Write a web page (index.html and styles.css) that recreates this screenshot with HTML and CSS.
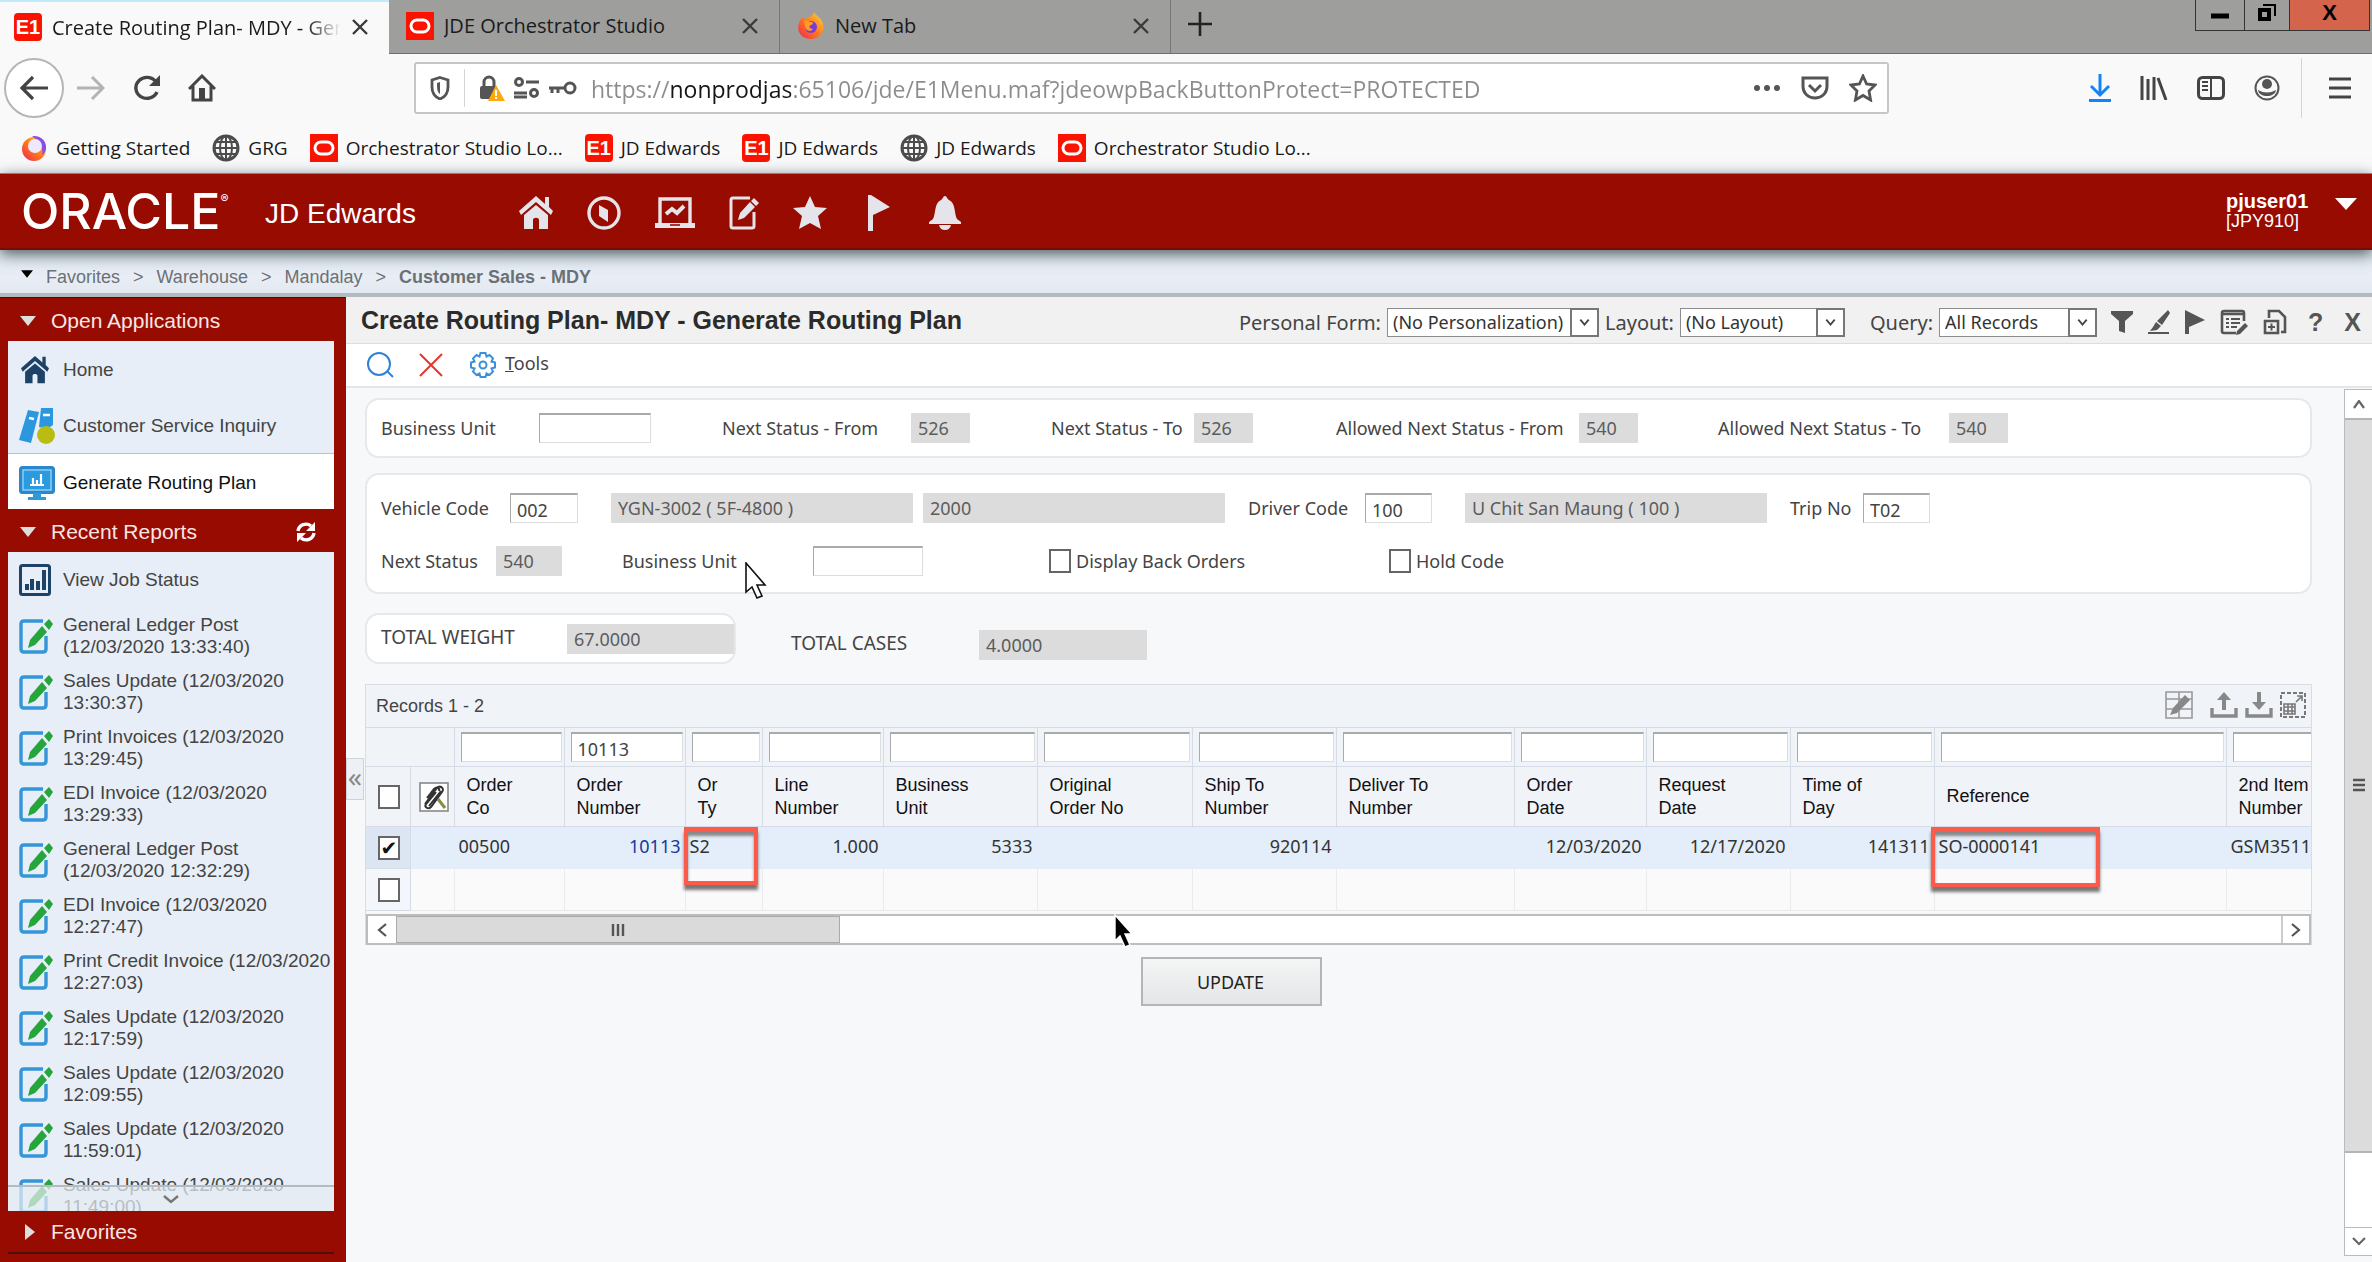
FILE: index.html
```html
<!DOCTYPE html>
<html lang="en">
<head>
<meta charset="utf-8">
<title>Create Routing Plan- MDY - Generate Routing Plan</title>
<link rel="stylesheet" href="styles.css">
</head>
<body>
<svg class="defs" aria-hidden="true">
  <defs>
    <linearGradient id="fox" x1="1" y1="0" x2="0" y2="1"><stop offset="0" stop-color="#ffd83a"/><stop offset=".5" stop-color="#ff7a1f"/><stop offset="1" stop-color="#f0244f"/></linearGradient>
  </defs>
  <symbol id="i-firefox" viewBox="0 0 28 28"><path d="M17 0c1 3 6 5 8 9 4 9-1 18-11 18S-1 19 2 11c1-3 3-5 4-6l2 3c3-4 8-3 9-8z" fill="url(#fox)"/><circle cx="14" cy="15" r="6" fill="#7a3bd8"/><path d="M7 9c4-1 5 1 8 1 2 0 1 3-1 3-3 1-1 4 2 4-3 4-8 1-8-3 0-2-1-3-1-5z" fill="#ff9a26"/></symbol>
  <symbol id="i-firefox2" viewBox="0 0 28 28"><circle cx="14" cy="15" r="12" fill="url(#fox)"/><path d="M12 2c9-1 15 5 14 13-1 3-2 5-4 6 2-7-3-14-10-19z" fill="#8a4fe0"/><circle cx="15" cy="12" r="7" fill="#efe9ff"/></symbol>
  <symbol id="i-oracle" viewBox="0 0 28 28"><rect width="28" height="28" fill="#fb1300"/><rect x="5" y="8" width="18" height="12" rx="6" fill="none" stroke="#fff" stroke-width="3"/></symbol>
  <symbol id="i-globe" viewBox="0 0 28 28"><g fill="none" stroke="#4c4c4c" stroke-width="2"><circle cx="14" cy="14" r="12" stroke-width="3"/><ellipse cx="14" cy="14" rx="6" ry="12"/><path d="M14 2v24M2 14h24M4 8h20M4 20h20"/></g></symbol>
  <symbol id="i-close" viewBox="0 0 18 18"><path d="M2 2l14 14M16 2L2 16" fill="none" stroke="#3a3a3a" stroke-width="2.4"/></symbol>
  <symbol id="i-house" viewBox="0 0 34 34"><path d="M17 0L0 15l2 4L17 6l15 13 2-4-4-4V1h-4v7z"/><path d="M17 9L5 19v14h9v-9c0-3 6-3 6 0v9h9V19z"/></symbol>
  <symbol id="i-report" viewBox="0 0 34 36"><path d="M24 3H5Q2 3 2 6v25q0 3 3 3h19q3 0 3-3V18" fill="none" stroke="#3496d8" stroke-width="3.4"/><path d="M25 6l5-5 4 5-4 6zM23 8l5 6-12 13-7 3 2-8z" fill="#26a53c"/></symbol>
  <symbol id="i-down" viewBox="0 0 14 10"><path d="M1 1l6 7 6-7" fill="none" stroke="#444" stroke-width="2.6"/></symbol>
  <symbol id="i-tri" viewBox="0 0 16 10"><path d="M0 0h16L8 10z"/></symbol>
  <symbol id="i-left" viewBox="0 0 10 14"><path d="M9 1L2 7l7 6" fill="none" stroke="#555" stroke-width="2.2"/></symbol>
</svg>

<header class="browser">
  <div class="tabs">
    <div class="tab active"><span class="e1">E1</span><span class="tab-title">Create Routing Plan- MDY - Generate</span><button class="plain" aria-label="Close tab"><svg width="18" height="18"><use href="#i-close"/></svg></button></div>
    <div class="tab"><svg width="28" height="28"><use href="#i-oracle"/></svg><span class="tab-title">JDE Orchestrator Studio</span><button class="plain" aria-label="Close tab"><svg width="18" height="18"><use href="#i-close"/></svg></button></div>
    <div class="tab"><svg width="28" height="28"><use href="#i-firefox"/></svg><span class="tab-title">New Tab</span><button class="plain" aria-label="Close tab"><svg width="18" height="18"><use href="#i-close"/></svg></button></div>
    <button class="plain new-tab" aria-label="New tab"><svg width="26" height="26" viewBox="0 0 26 26"><path d="M13 1v24M1 13h24" stroke="#222" stroke-width="2.6"/></svg></button>
    <div class="window-buttons">
      <button class="win min" aria-label="Minimize"><svg width="18" height="18" viewBox="0 0 18 18"><path d="M0 12h18" stroke="#000" stroke-width="5"/></svg></button>
      <button class="win restore" aria-label="Restore"><svg width="18" height="18" viewBox="0 0 18 18"><path d="M2 6h9v9H2z" fill="none" stroke="#000" stroke-width="4"/><path d="M5 1h12v11" fill="none" stroke="#000" stroke-width="2"/></svg></button>
      <button class="win exit" aria-label="Close">X</button>
    </div>
  </div>
  <div class="nav">
    <button class="plain back" aria-label="Back"><svg width="30" height="26" viewBox="0 0 30 26"><path d="M14 2L3 13l11 11M3 13h26" fill="none" stroke="#444" stroke-width="3.2"/></svg></button>
    <button class="plain fwd" aria-label="Forward"><svg width="28" height="24" viewBox="0 0 28 24"><path d="M15 1l11 11-11 11M26 12H0" fill="none" stroke="#b4b4b4" stroke-width="3"/></svg></button>
    <button class="plain reload" aria-label="Reload"><svg width="28" height="26" viewBox="0 0 28 26"><path d="M24 17a11 10.500 0 1 1-1-10" fill="none" stroke="#444" stroke-width="3.4"/><path d="M16 11h11V0z" fill="#444"/></svg></button>
    <button class="plain home" aria-label="Home"><svg width="28" height="28" viewBox="0 0 28 28"><path d="M1 15L14 2l13 13M5 12v14h18V12" fill="none" stroke="#444" stroke-width="3"/><path d="M11 14h6v11h-6z" fill="#444"/></svg></button>
    <div class="urlbar">
      <svg width="20" height="24" viewBox="0 0 20 24"><path d="M10 1.500l8 2.500v7c0 6-3 10-8 12-5-2-8-6-8-12V4z" fill="none" stroke="#555" stroke-width="2.800"/><path d="M10 6v12c-3-2-3-6-3-11z" fill="#555"/></svg>
      <i class="sep"></i>
      <svg width="26" height="27" viewBox="0 0 26 27"><path d="M5 12V7a5 5 0 0 1 10 0v5" fill="none" stroke="#555" stroke-width="3"/><rect x="1" y="11" width="17" height="13" rx="2" fill="#555"/><path d="M17 10l9 16H9z" fill="#fda80d"/><path d="M17 15v6M17 22v2" stroke="#fff" stroke-width="2"/></svg>
      <svg width="26" height="22" viewBox="0 0 26 22"><g fill="none" stroke="#555" stroke-width="3"><circle cx="5" cy="5" r="3.500"/><circle cx="20" cy="16" r="3.500"/><path d="M12 5h13M0 16h13M0 20h13"/></g></svg>
      <svg width="28" height="16" viewBox="0 0 28 16"><g fill="none" stroke="#555" stroke-width="3"><circle cx="21" cy="8" r="5"/><path d="M16 8H0M3 8v5M9 8v5"/></g></svg>
      <input class="url" type="text" aria-label="Address" value="https://nonprodjas:65106/jde/E1Menu.maf?jdeowpBackButtonProtect=PROTECTED">
      <svg width="28" height="8" viewBox="0 0 28 8"><g fill="#555"><circle cx="4" cy="4" r="3"/><circle cx="14" cy="4" r="3"/><circle cx="24" cy="4" r="3"/></g></svg>
      <svg width="28" height="24" viewBox="0 0 28 24"><path d="M2 2h24v8c0 8-6 12-12 12S2 18 2 10z" fill="none" stroke="#555" stroke-width="3"/><path d="M8 9l6 6 6-6" fill="none" stroke="#555" stroke-width="3"/></svg>
      <svg width="28" height="28" viewBox="0 0 28 28"><path d="M14 2l3.600 8 8.400 1-6 6 1.600 9L14 21.500 6.400 26 8 17l-6-6 8.400-1z" fill="none" stroke="#555" stroke-width="2.800"/></svg>
    </div>
    <div class="tools">
      <svg width="22" height="28" viewBox="0 0 22 28"><path d="M11 0v20M2 12l9 9 9-9M0 26.500h22" fill="none" stroke="#1483f7" stroke-width="3"/></svg>
      <svg width="28" height="24" viewBox="0 0 28 24"><path d="M2 0v24M8 3v21M14 1v23M18 2l8 22" fill="none" stroke="#444" stroke-width="3"/></svg>
      <svg width="28" height="24" viewBox="0 0 28 24"><rect x="1.500" y="1.500" width="25" height="21" rx="4" fill="none" stroke="#444" stroke-width="3"/><path d="M14 1v22M5 6h6M5 10h6M5 14h6" stroke="#444" stroke-width="2"/></svg>
      <svg width="26" height="26" viewBox="0 0 26 26"><circle cx="13" cy="13" r="11.500" fill="none" stroke="#555" stroke-width="2"/><circle cx="13" cy="9" r="5" fill="#555"/><path d="M4 15q9 5 18 0c-1 8-17 8-18 0z" fill="#555"/></svg>
      <i class="sep tall"></i>
      <svg width="22" height="22" viewBox="0 0 22 22"><path d="M0 2h22M0 11h22M0 20h22" stroke="#444" stroke-width="3.200"/></svg>
    </div>
  </div>
  <nav class="bookmarks">
    <a href="#"><svg width="28" height="28"><use href="#i-firefox2"/></svg>Getting Started</a>
    <a href="#"><svg width="28" height="28"><use href="#i-globe"/></svg>GRG</a>
    <a href="#"><svg width="28" height="28"><use href="#i-oracle"/></svg>Orchestrator Studio Lo...</a>
    <a href="#"><span class="e1">E1</span>JD Edwards</a>
    <a href="#"><span class="e1">E1</span>JD Edwards</a>
    <a href="#"><svg width="28" height="28"><use href="#i-globe"/></svg>JD Edwards</a>
    <a href="#"><svg width="28" height="28"><use href="#i-oracle"/></svg>Orchestrator Studio Lo...</a>
  </nav>
</header>

<header class="brand">
  <span class="logo">ORACLE<sup>®</sup></span>
  <span class="product">JD Edwards</span>
  <nav class="brand-icons">
    <a href="#" aria-label="Home"><svg width="34" height="34"><use href="#i-house"/></svg></a>
    <a href="#" aria-label="Navigator"><svg width="34" height="34" viewBox="0 0 34 34"><circle cx="17" cy="17" r="15" fill="none" stroke="#e4e4ea" stroke-width="3.400"/><path d="M12 9l9 5v12l-9-6z"/></svg></a>
    <a href="#" aria-label="Dashboard"><svg width="40" height="32" viewBox="0 0 40 32"><path d="M5 26V2h30v24" fill="none" stroke="#e4e4ea" stroke-width="3.400"/><path d="M0 26h40v5H0z"/><path d="M11 17l6-5 5 4 7-7" fill="none" stroke="#e4e4ea" stroke-width="4"/><path d="M15 28h10" stroke="#980b00" stroke-width="1.600"/></svg></a>
    <a href="#" aria-label="Edit"><svg width="30" height="34" viewBox="0 0 30 34"><path d="M21 2H4Q2 2 2 4v26q0 2 2 2h19q2 0 2-2V16" fill="none" stroke="#e4e4ea" stroke-width="3"/><path d="M25 2l5 5-3 3-5-5zM21 6l5 5-11 11-6 2 2-7z"/></svg></a>
    <a href="#" aria-label="Favorites"><svg width="34" height="34" viewBox="0 0 34 34"><path d="M17 0l5 11 12 1-9 8 3 13-11-6-11 6 3-13-9-8 12-1z"/></svg></a>
    <a href="#" aria-label="Flag"><svg width="34" height="36" viewBox="0 0 34 36"><path d="M7 0h3l19 12-17 8v16H7z"/></svg></a>
    <a href="#" aria-label="Notifications"><svg width="32" height="34" viewBox="0 0 32 34"><path d="M16 0c2 0 2 3 4 4 7 3 5 14 8 19l4 3v2H0v-2l4-3C7 18 5 7 12 4c2-1 2-4 4-4zM10 29h12q-1 5-6 5t-6-5z"/></svg></a>
  </nav>
  <div class="user"><strong>pjuser01</strong><span>[JPY910]</span></div>
  <svg class="user-arrow" width="22" height="12" viewBox="0 0 16 10" preserveAspectRatio="none"><path d="M0 0h16L8 10z"/></svg>
</header>

<nav class="crumbs">
  <svg width="12" height="8"><use href="#i-tri"/></svg>
  <a href="#">Favorites</a><span>&gt;</span><a href="#">Warehouse</a><span>&gt;</span><a href="#">Mandalay</a><span>&gt;</span><b>Customer Sales - MDY</b>
</nav>

<div class="workspace">
  <aside class="sidebar">
    <h2><svg width="16" height="10"><use href="#i-tri"/></svg>Open Applications</h2>
    <ul class="panel apps">
      <li><svg class="navy" width="28" height="28"><use href="#i-house"/></svg><a href="#">Home</a></li>
      <li><svg width="36" height="36" viewBox="0 0 36 36"><path d="M9 2l11 2-8 31-12-3z" fill="#2b97df"/><path d="M22 0h12v17l-6 4-8-2z" fill="#2b97df"/><path d="M10 10l5 1M24 7h7" stroke="#fff" stroke-width="2.400"/><circle cx="27" cy="27" r="9" fill="#b9bd13"/></svg><a href="#">Customer Service Inquiry</a></li>
      <li class="current"><svg width="36" height="34" viewBox="0 0 36 34"><rect x="1.500" y="1.500" width="33" height="25" rx="2" fill="#2b9be0" stroke="#2b87cb" stroke-width="3"/><rect x="4" y="4" width="28" height="20" fill="none" stroke="#bfe2f7"/><path d="M11 19h14M14 18v-6M18 18v-4M22 18V8" stroke="#fff" stroke-width="2.200"/><path d="M14 27h8v4h5v3H9v-3h5z" fill="#2b9be0"/></svg><a href="#">Generate Routing Plan</a></li>
    </ul>
    <h2><svg width="16" height="10"><use href="#i-tri"/></svg>Recent Reports
      <button class="plain refresh" aria-label="Refresh reports"><svg width="20" height="20" viewBox="0 0 20 20"><path d="M2 9a8 8 0 0 1 13-5M18 11a8 8 0 0 1-13 5" fill="none" stroke="#fff" stroke-width="3.400"/><path d="M19 0v9h-9zM1 20v-9h9z" fill="#fff"/></svg></button></h2>
    <ul class="panel reports">
      <li class="single"><svg width="32" height="32" viewBox="0 0 32 32"><rect x="1.500" y="1.500" width="29" height="29" rx="2" fill="none" stroke="#1d4268" stroke-width="3"/><path d="M8 26v-6M13 26V15M19 26v-9M25 26V6" stroke="#1d4268" stroke-width="4"/></svg><a href="#">View Job Status</a></li>
      <li><svg width="34" height="36"><use href="#i-report"/></svg><a href="#">General Ledger Post (12/03/2020 13:33:40)</a></li>
      <li><svg width="34" height="36"><use href="#i-report"/></svg><a href="#">Sales Update (12/03/2020 13:30:37)</a></li>
      <li><svg width="34" height="36"><use href="#i-report"/></svg><a href="#">Print Invoices (12/03/2020 13:29:45)</a></li>
      <li><svg width="34" height="36"><use href="#i-report"/></svg><a href="#">EDI Invoice (12/03/2020 13:29:33)</a></li>
      <li><svg width="34" height="36"><use href="#i-report"/></svg><a href="#">General Ledger Post (12/03/2020 12:32:29)</a></li>
      <li><svg width="34" height="36"><use href="#i-report"/></svg><a href="#">EDI Invoice (12/03/2020 12:27:47)</a></li>
      <li><svg width="34" height="36"><use href="#i-report"/></svg><a href="#">Print Credit Invoice (12/03/2020 12:27:03)</a></li>
      <li><svg width="34" height="36"><use href="#i-report"/></svg><a href="#">Sales Update (12/03/2020 12:17:59)</a></li>
      <li><svg width="34" height="36"><use href="#i-report"/></svg><a href="#">Sales Update (12/03/2020 12:09:55)</a></li>
      <li><svg width="34" height="36"><use href="#i-report"/></svg><a href="#">Sales Update (12/03/2020 11:59:01)</a></li>
      <li><svg width="34" height="36"><use href="#i-report"/></svg><a href="#">Sales Update (12/03/2020 11:49:00)</a></li>
      <li class="more"><svg width="16" height="9" viewBox="0 0 16 9"><path d="M1 1l7 6 7-6" fill="none" stroke="#777" stroke-width="2.400"/></svg></li>
    </ul>
    <h2 class="favorites"><svg width="10" height="16" viewBox="0 0 10 16"><path d="M0 0v16l10-8z"/></svg>Favorites</h2>
  </aside>

  <main class="main">
    <div class="titlebar">
      <h1>Create Routing Plan- MDY - Generate Routing Plan</h1>
      <label for="pf">Personal Form:</label>
      <span class="select pf"><select id="pf"><option>(No Personalization)</option></select><svg width="14" height="10"><use href="#i-down"/></svg></span>
      <label for="lay">Layout:</label>
      <span class="select lay"><select id="lay"><option>(No Layout)</option></select><svg width="14" height="10"><use href="#i-down"/></svg></span>
      <label for="qry" class="query">Query:</label>
      <span class="select qry"><select id="qry"><option>All Records</option></select><svg width="14" height="10"><use href="#i-down"/></svg></span>
      <div class="title-icons">
        <svg width="22" height="22" viewBox="0 0 22 22"><path d="M0 0h22v3l-8 7v12l-6-2V10L0 3z"/></svg>
        <svg width="22" height="24" viewBox="0 0 22 24"><path d="M20 0l2 3-8 12-5-4zM8 12l5 4-4 4-7 1 3-4z"/><path d="M0 22h21v2H0z"/></svg>
        <svg width="20" height="24" viewBox="0 0 20 24"><path d="M0 0l20 10L4 17v7H0z"/></svg>
        <svg width="28" height="26" viewBox="0 0 28 26"><path d="M24 12V4q0-2-2-2H4Q2 2 2 4v18q0 2 2 2h12M2 5h22" fill="none" stroke="#555" stroke-width="2.600"/><path d="M6 10h3M11 10h9M6 14h3M11 14h9M6 18h3M11 18h6" stroke="#555" stroke-width="2"/><path d="M25 14l3 3-8 8-4 1 1-4z"/></svg>
        <svg width="24" height="26" viewBox="0 0 24 26"><path d="M6 9V2h10l6 6v15h-4" fill="none" stroke="#555" stroke-width="2.600"/><path d="M2 12h13v12H2z" fill="none" stroke="#555" stroke-width="2.600"/><path d="M5 18h7M8.500 14.500v7" stroke="#555" stroke-width="2"/></svg>
        <b>?</b>
        <b>X</b>
      </div>
    </div>
    <div class="toolbar">
      <button class="plain" aria-label="Find"><svg width="28" height="26" viewBox="0 0 28 26"><g fill="none" stroke="#2f83d6" stroke-width="2"><circle cx="13" cy="12" r="11"/><path d="M21 19l6 6"/></g></svg></button>
      <button class="plain" aria-label="Cancel"><svg width="24" height="24" viewBox="0 0 24 24"><path d="M1 1l22 22M23 1L1 23" stroke="#e2372d" stroke-width="2"/></svg></button>
      <button class="plain tools-menu"><svg width="26" height="26" viewBox="0 0 26 26"><g fill="none" stroke="#3d8fd9" stroke-width="2"><circle cx="13" cy="13" r="3.500"/><path d="M10.500 1h5l1 3.500 3-1.500 3.500 3.500-1.500 3 3.500 1v5l-3.500 1 1.500 3-3.500 3.500-3-1.500-1 3.500h-5l-1-3.500-3 1.500L3 19.500l1.500-3L1 15.500v-5l3.500-1L3 6.500 6.500 3l3 1.500z"/></g></svg><span><u>T</u>ools</span></button>
    </div>

    <div class="body">
      <div class="content">
        <button class="plain collapse" aria-label="Collapse sidebar">«</button>
        <section class="card row status">
          <label for="f1">Business Unit</label><input id="f1" type="text">
          <label for="f2">Next Status - From</label><input id="f2" type="text" readonly value="526">
          <label for="f3">Next Status - To</label><input id="f3" type="text" readonly value="526">
          <label for="f4">Allowed Next Status - From</label><input id="f4" type="text" readonly value="540">
          <label for="f5">Allowed Next Status - To</label><input id="f5" type="text" readonly value="540">
        </section>
        <section class="card vehicle">
          <div class="row line1">
            <label for="f6">Vehicle Code</label><input id="f6" type="text" value="002">
            <input class="vehicle-name" type="text" readonly aria-label="Vehicle description" value="YGN-3002 ( 5F-4800 )">
            <input class="vehicle-size" type="text" readonly aria-label="Vehicle capacity" value="2000">
            <label class="driver" for="f7">Driver Code</label><input id="f7" type="text" value="100">
            <input class="driver-name" type="text" readonly aria-label="Driver name" value="U Chit San Maung ( 100 )">
            <label class="trip" for="f8">Trip No</label><input id="f8" type="text" value="T02">
          </div>
          <div class="row line2">
            <label for="f9">Next Status</label><input id="f9" type="text" readonly value="540">
            <label class="unit" for="f10">Business Unit</label><input id="f10" type="text">
            <label class="check back-orders"><input type="checkbox">Display Back Orders</label>
            <label class="check"><input type="checkbox">Hold Code</label>
          </div>
          <svg class="cursor" width="22" height="38" viewBox="0 0 22 38"><path d="M1 1v29l6-5 5 11 5-2-5-11h8z" fill="#fff" stroke="#111" stroke-width="1.600"/></svg>
        </section>
        <div class="totals">
          <div class="card"><label for="f11">TOTAL WEIGHT</label><input id="f11" type="text" readonly value="67.0000"></div>
          <div class="cases"><label for="f12">TOTAL CASES</label><input id="f12" type="text" readonly value="4.0000"></div>
        </div>

        <section class="grid">
          <div class="grid-head"><span>Records 1 - 2</span>
            <div class="grid-icons">
              <svg width="28" height="28" viewBox="0 0 28 28"><path d="M1 1h26v26H1zM1 8h26M1 18h26M14 1v26" fill="none" stroke="#999" stroke-width="1.600"/><path d="M20 4l5 5-13 13-7 2 3-7z" fill="#888"/></svg>
              <svg width="28" height="26" viewBox="0 0 28 26"><path d="M2 16v8h24v-8" fill="none" stroke="#888" stroke-width="3.400"/><path d="M14 0l7 8h-5v10h-4V8H7z" fill="#888"/></svg>
              <svg width="28" height="26" viewBox="0 0 28 26"><path d="M2 16v8h24v-8" fill="none" stroke="#888" stroke-width="3.400"/><path d="M14 18l7-8h-5V0h-4v10H7z" fill="#888"/></svg>
              <svg width="26" height="26" viewBox="0 0 26 26"><rect x="1" y="1" width="24" height="24" fill="none" stroke="#777" stroke-width="2" stroke-dasharray="4 2"/><path d="M4 12h11v10H4zM4 15h11M4 19h11M8 12v10M12 12v10M16 10l6-6M17 4h5v5" fill="none" stroke="#777" stroke-width="1.600"/></svg>
            </div>
          </div>
          <div class="grid-view">
          <table>
            <colgroup><col class="c44"><col class="c44"><col class="c110"><col class="c121"><col class="c77"><col class="c121"><col class="c154"><col class="c155"><col class="c144"><col class="c178"><col class="c132"><col class="c144"><col class="c144"><col class="c292"><col class="c144"></colgroup>
            <thead>
              <tr class="filters">
                <td colspan="2"></td>
                <td><input type="text" aria-label="Filter Order Co"></td><td><input type="text" aria-label="Filter Order Number" value="10113"></td><td><input type="text" aria-label="Filter Or Ty"></td><td><input type="text" aria-label="Filter Line Number"></td><td><input type="text" aria-label="Filter Business Unit"></td><td><input type="text" aria-label="Filter Original Order No"></td><td><input type="text" aria-label="Filter Ship To"></td><td><input type="text" aria-label="Filter Deliver To"></td><td><input type="text" aria-label="Filter Order Date"></td><td><input type="text" aria-label="Filter Request Date"></td><td><input type="text" aria-label="Filter Time of Day"></td><td><input type="text" aria-label="Filter Reference"></td><td><input type="text" aria-label="Filter 2nd Item Number"></td>
              </tr>
              <tr class="heads">
                <th class="pick"><input type="checkbox" aria-label="Select all"></th>
                <th class="pick"><svg width="30" height="30" viewBox="0 0 30 30"><rect x="1" y="1" width="28" height="28" fill="#fff" stroke="#888" stroke-width="1.600"/><path d="M6 22L18 6c3-3 8 0 5 4L12 25c-3 3-7 0-5-3L17 10M10 24L22 9M8 16l7-9c3-3 6-1 5 2" fill="none" stroke="#333" stroke-width="2"/><path d="M19 17l7 9" stroke="#8a8a40" stroke-width="3"/></svg></th>
                <th>Order<br>Co</th><th>Order<br>Number</th><th>Or<br>Ty</th><th>Line<br>Number</th><th>Business<br>Unit</th><th>Original<br>Order No</th><th>Ship To<br>Number</th><th>Deliver To<br>Number</th><th>Order<br>Date</th><th>Request<br>Date</th><th>Time of<br>Day</th><th>Reference</th><th>2nd Item<br>Number</th>
              </tr>
            </thead>
            <tbody>
              <tr class="selected">
                <td class="pick"><input type="checkbox" checked aria-label="Select row 1"></td><td></td>
                <td>00500</td><td class="num"><a href="#">10113</a></td><td class="marked">S2<i class="mark"></i></td><td class="num">1.000</td><td class="num">5333</td><td></td><td class="num">920114</td><td></td><td class="num">12/03/2020</td><td class="num">12/17/2020</td><td class="num">141311</td><td class="marked">SO-0000141<i class="mark wide"></i></td><td>GSM3511</td>
              </tr>
              <tr>
                <td class="pick"><input type="checkbox" aria-label="Select row 2"></td><td></td><td></td><td></td><td></td><td></td><td></td><td></td><td></td><td></td><td></td><td></td><td></td><td></td><td></td>
              </tr>
            </tbody>
          </table>
          </div>
          <div class="hscroll">
            <button class="plain" aria-label="Scroll left"><svg width="10" height="14"><use href="#i-left"/></svg></button>
            <div class="hthumb"><svg width="14" height="12" viewBox="0 0 14 12"><path d="M2 0v12M7 0v12M12 0v12" stroke="#555" stroke-width="2.400"/></svg></div>
            <button class="plain right" aria-label="Scroll right"><svg width="10" height="14" viewBox="0 0 10 14"><path d="M1 1l7 6-7 6" fill="none" stroke="#555" stroke-width="2.200"/></svg></button>
          </div>
          <svg class="cursor dark" width="20" height="34" viewBox="0 0 20 34"><path d="M1 1v26l5-5 5 11 5-2-5-11h7z" fill="#000" stroke="#fff" stroke-width="1.400"/></svg>
        </section>
        <button class="update">UPDATE</button>
      </div>
      <div class="vscroll">
        <button class="plain" aria-label="Scroll up"><svg width="12" height="9" viewBox="0 0 12 9"><path d="M1 8l5-7 5 7" fill="none" stroke="#666" stroke-width="2.200"/></svg></button>
        <div class="vthumb"><svg width="12" height="14" viewBox="0 0 12 14"><path d="M0 2h12M0 7h12M0 12h12" stroke="#555" stroke-width="2.600"/></svg></div>
        <button class="plain bottom" aria-label="Scroll down"><svg width="14" height="9" viewBox="0 0 14 9"><path d="M1 1l6 6 6-6" fill="none" stroke="#666" stroke-width="2.200"/></svg></button>
      </div>
    </div>
  </main>
</div>
</body>
</html>
```
FILE: styles.css
```css
* { box-sizing: border-box; }
body {
  margin: 0;
  min-height: 100vh;
  display: flex;
  flex-direction: column;
  font-family: "Liberation Sans", Arial, sans-serif;
  font-size: 18px;
  color: #444;
  background: #f6f8fa;
}
.defs { position: absolute; width: 0; height: 0; }
svg { flex: none; display: block; }
a { color: inherit; text-decoration: none; }
h1, h2, ul { margin: 0; padding: 0; list-style: none; font-weight: normal; }
.plain { border: 0; background: none; padding: 0; font: inherit; color: inherit; display: flex; align-items: center; justify-content: center; }

/* browser window */
.browser { background: #f9f9fa; font-family: "Open Sans", "Noto Sans", sans-serif; color: #1a1a1a; }
.tabs { display: flex; height: 54px; background: #9e9e9d; border-bottom: 1px solid #6f6f6f; }
.tab { width: 391px; display: flex; align-items: center; gap: 10px; padding: 0 20px 2px 16px; border-right: 1px solid #777; border-left: 1px solid transparent; font-size: 20px; }
.tab.active { width: 389px; margin-bottom: -1px; border: 0; padding-left: 14px; background: #f9f9fa; border-top: 2px solid #bfeaf8; }
.tab-title { flex: 1; white-space: nowrap; overflow: hidden; }
.tab.active .tab-title { mask-image: linear-gradient(90deg, #000 88%, transparent); }
.e1 { width: 28px; height: 28px; border-radius: 4px; background: #fb1300; color: #fff; font: bold 20px/28px "Liberation Sans", sans-serif; text-align: center; flex: none; }
.new-tab { margin: 0 16px; height: 48px; }
.window-buttons { margin-left: auto; display: flex; height: 31px; padding-right: 2px; }
.win { border: 1px solid #333; border-top: 0; border-right: 0; background: none; padding: 0 0 4px; display: flex; align-items: center; justify-content: center; }
.min { width: 49px; }
.restore { width: 45px; }
.exit { width: 81px; background: #d4654c; border-right: 1px solid #333; font: bold 22px "Liberation Sans", sans-serif; }
.nav { display: flex; align-items: center; height: 68px; padding: 0 21px 0 4px; }
.back { width: 60px; height: 60px; border: 2px solid #b5b5b5; border-radius: 30px; background: #fff; }
.fwd { margin-left: 13px; }
.reload { margin-left: 28px; }
.home { margin-left: 27px; }
.urlbar { margin-left: 198px; width: 1475px; height: 52px; border: 2px solid #c6c6c6; border-radius: 3px; background: #fff; display: flex; align-items: center; gap: 9px; padding: 0 10px 0 14px; }
.sep { width: 1px; height: 38px; background: #d4d4d4; margin: 0 5px; }
.sep.tall { height: 60px; margin: 0 -2px 0 -8px; }
.url { flex: 1; min-width: 0; border: 0; outline: 0; padding: 2px 0 0 5px; height: 40px; font: 23px "Open Sans", "Noto Sans", sans-serif; background: linear-gradient(90deg, #8c8c8c 83px, #151515 83px 205px, #8c8c8c 205px) text; color: transparent; }
.urlbar > svg:nth-last-child(2) { margin: 0 11px; }
.tools { margin-left: auto; display: flex; align-items: center; gap: 29px; }
.bookmarks { height: 51px; display: flex; align-items: center; gap: 22px; padding: 0 20px; font-size: 19px; }
.bookmarks a { display: flex; align-items: center; gap: 8px; white-space: nowrap; }

/* product bar */
.brand { height: 77px; background: #980b00; border-top: 1px solid #c96a60; border-bottom: 2px solid #7c0a04; color: #fff; display: flex; align-items: center; padding: 0 15px 0 21px; position: relative; box-shadow: 0 4px 14px #4d5b60; z-index: 1; }
.logo { font: 500 50px/50px Inter, "Liberation Sans", sans-serif; width: 244px; white-space: nowrap; }
.logo sup { font-size: 12px; line-height: 1; vertical-align: 26px; }
.product { font-size: 28px; width: 254px; margin-top: 6px; }
.brand-icons { display: flex; align-items: center; gap: 34px; fill: #e4e4ea; padding-top: 3px; }
.user { margin-left: auto; display: flex; flex-direction: column; width: 90px; margin-right: 19px; font-size: 18px; line-height: 20px; white-space: nowrap; }
.user strong { font-size: 20px; }
.user-arrow { fill: #fff; margin-bottom: 14px; }
.crumbs { height: 47px; background: linear-gradient(#dfe7ee, #e9eef6 60%, #e3e9f0); border-bottom: 4px solid #b3bbbf; display: flex; align-items: center; gap: 13px; padding: 12px 22px 0 21px; color: #6c7175; white-space: nowrap; }
.crumbs svg { margin: 0 0 8px; }

/* sidebar */
.workspace { flex: 1; display: flex; }
.sidebar { width: 346px; background: #980b00; display: flex; flex-direction: column; padding: 0 12px 8px 8px; border-top: 1px solid #5c0500; font-size: 19px; }
.sidebar h2 { display: flex; align-items: center; gap: 15px; height: 43px; padding: 3px 18px 0 12px; font-size: 21px; color: #f7e6e4; fill: #ddd; }
.sidebar .favorites { gap: 16px; padding: 1px 18px 0 17px; border-bottom: 2px solid #4d1010; }
.refresh { margin-left: auto; }
.panel { background: #e7eef7; }
.apps li { display: flex; align-items: center; height: 56px; padding: 2px 0 0 11px; }
.apps a { margin-left: 8px; }
.apps .navy { fill: #1d4268; margin: 0 6px 0 2px; }
.apps .current { background: #fff; border-top: 1px solid #b9c2cc; color: #111; }
.reports { flex: 1 1 0; min-height: 0; overflow: hidden; position: relative; }
.reports li { display: flex; height: 56px; align-items: center; gap: 10px; padding: 0 0 0 11px; line-height: 22px; }
.reports li.single { gap: 12px; }
.reports li.more { position: absolute; left: 0; right: 0; bottom: 0; height: 26px; padding: 0; justify-content: center; border-top: 2px solid #b2bac2; background: #e4ebf3b8; }

/* form header */
.main { flex: 1; min-width: 0; display: flex; flex-direction: column; }
.titlebar { height: 47px; display: flex; align-items: center; background: #f1f1f1; border-bottom: 1px solid #ddd; padding: 4px 11px 0 15px; white-space: nowrap; font-family: "Noto Sans", sans-serif; }
.titlebar h1 { font: bold 25px "Liberation Sans", Arial, sans-serif; color: #2b2b2b; margin: 0 auto 4px 0; }
.titlebar label { font-size: 20px; padding: 0 6px; }
.titlebar .query { margin-left: 19px; }
.select { position: relative; height: 29px; background: #fff; border: 1px solid #8c8c8c; border-right: 0; }
.select select { appearance: none; width: 100%; height: 100%; border: 0; background: none; padding: 0 28px 0 5px; font: 18px "Noto Sans", sans-serif; color: #333; }
.select svg { position: absolute; right: 0; top: -1px; width: 29px; height: 29px; padding: 9px 7px; border: 2px solid #777; pointer-events: none; }
.pf { width: 212px; }
.lay { width: 165px; }
.qry { width: 158px; }
.title-icons { display: flex; align-items: center; gap: 15px; margin-left: 14px; fill: #555; color: #555; font: bold 25px "Liberation Sans", sans-serif; }
.title-icons b { margin-left: 6px; }
.toolbar { height: 44px; display: flex; align-items: center; gap: 25px; padding: 0 20px; background: #fff; border-bottom: 2px solid #e4e6e8; }
.tools-menu { gap: 9px; font-family: "Noto Sans", sans-serif; margin-left: 2px; }
.tools-menu span { margin-bottom: 4px; }

/* form body */
.body { flex: 1; display: flex; font-family: "Noto Sans", sans-serif; }
.content { flex: 1; min-width: 0; padding: 10px 32px 0 19px; position: relative; display: flex; flex-direction: column; }
.card { background: #fff; border: 2px solid #e6e9ec; border-radius: 14px; }
.row { display: grid; align-items: center; justify-content: start; white-space: nowrap; }
.content input[type="text"] { width: 100%; height: 30px; border: 1px solid #ddd; border-top: 2px solid #aaa; border-left: 1px solid #aaa; background: #fff; padding: 2px 6px 0; font: 18px "Noto Sans", sans-serif; color: #444; border-radius: 0; }
.content input[readonly] { border: 0; background: #dcdcdc; color: #5c5c5c; padding: 0 7px; }
input[type="checkbox"] { appearance: none; width: 22px; height: 24px; margin: 0; border: 2px solid #666; background: #fff; flex: none; display: grid; place-items: center; }
input[type="checkbox"]:checked::before { content: "✔"; color: #111; font: 20px/20px "DejaVu Sans", sans-serif; }
.status { height: 60px; padding-left: 14px; grid-template-columns: 158px 112px 71px 189px 59px 81px 143px 59px 83px 243px 59px 80px 231px 59px; }
.status label:nth-of-type(2) { grid-column: 4; }
.status label:nth-of-type(3) { grid-column: 7; }
.status label:nth-of-type(4) { grid-column: 10; }
.status label:nth-of-type(5) { grid-column: 13; }
.vehicle { height: 121px; margin-top: 15px; padding: 18px 0 0 14px; position: relative; display: flex; flex-direction: column; gap: 23px; }
.line1 { grid-template-columns: 129px 68px 33px 302px 10px 302px 23px 117px 67px 33px 302px 23px 73px 67px; }
.vehicle-name { grid-column: 4; }
.vehicle-size { grid-column: 6; }
.driver { grid-column: 8; }
.driver-name { grid-column: 11; }
.trip { grid-column: 13; }
.line2 { grid-template-columns: 115px 66px 60px 191px 110px 126px 340px auto; }
.unit { grid-column: 4; }
.back-orders { grid-column: 7; }
.check { display: flex; align-items: center; gap: 5px; }
.cursor { position: absolute; left: 378px; top: 87px; }
.totals { display: flex; align-items: center; gap: 55px; margin-top: 19px; }
.totals label { white-space: nowrap; font-size: 19px; flex: none; }
.totals .card { width: 371px; height: 51px; display: flex; align-items: center; padding-left: 14px; }
.totals .card label { width: 186px; padding-bottom: 3px; }
.cases { display: flex; align-items: center; padding-top: 12px; }
.cases label { width: 188px; padding-bottom: 3px; }
.content .cases input[type="text"] { width: 168px; }

/* data grid */
.grid { margin-top: 20px; border: 1px solid #d8dde2; border-bottom: 0; position: relative; }
.grid-head { height: 42px; background: #f0f3f8; display: flex; align-items: center; justify-content: space-between; padding: 0 5px 0 10px; font-family: "Liberation Sans", sans-serif; }
.grid-icons { display: flex; align-items: center; gap: 7px; padding-bottom: 3px; }
.grid-icons svg:first-child { margin-right: 10px; }
.grid-view { overflow: hidden; position: relative; }
table { table-layout: fixed; border-collapse: collapse; width: 2004px; }
.c44 { width: 44px; } .c77 { width: 77px; } .c110 { width: 110px; } .c121 { width: 121px; } .c132 { width: 132px; }
.c144 { width: 144px; } .c154 { width: 154px; } .c155 { width: 155px; } .c178 { width: 178px; } .c292 { width: 292px; }
td, th { padding: 0; text-align: left; }
thead td, thead th { background: #f0f3f8; border: 1px solid #d5dce6; border-left: 0; font-weight: normal; }
.filters td { height: 39px; padding: 0 2px 0 6px; }
.heads th { height: 60px; padding-left: 12px; line-height: 23px; color: #111; font-family: "Liberation Sans", sans-serif; }
tbody td { height: 42px; border-right: 1px solid #e9ecee; border-bottom: 1px solid #e9ecee; background: #fafafa; padding: 0 4px 3px 4px; white-space: nowrap; color: #333; }
tbody .num { text-align: right; }
tbody a { color: #15399a; }
.selected td { background: #e3eefa; border-color: #e3eefa; }
.heads .pick, tbody .pick { padding: 0 0 0 12px; }
.heads .pick + .pick { padding-left: 8px; }
tbody .pick { background: #f3f6fa; border-color: #d5dce6; }
tbody .selected .pick { background: #dbe6f2; }
.marked { position: relative; }
.mark { position: absolute; left: -2px; top: 0; width: 74px; height: 58px; border: 4px solid #fc5a4b; box-shadow: 0 5px 3px #777, inset 0 5px 3px #888; z-index: 1; }
.mark.wide { left: -4px; width: 169px; height: 60px; }
.hscroll { display: flex; height: 31px; margin-top: 3px; border: 2px solid #bdbdbd; background: #fff; }
.hscroll .plain { width: 28px; }
.hthumb { width: 444px; background: #dadada; border: 1px solid #aaa; display: grid; place-items: center; }
.hscroll .right { margin-left: auto; border-left: 2px solid #ccc; }
.cursor.dark { left: 748px; top: 229px; }
.update { align-self: center; margin: 12px 0 0 -214px; width: 181px; height: 49px; border: 2px solid #b3b6b8; background: linear-gradient(#f4f5f5, #e4e6e7); font: 18px "Noto Sans", sans-serif; color: #222; padding: 0 2px 0 0; }
.collapse { position: absolute; left: 0; top: 370px; width: 18px; height: 42px; border: 1px solid #ccd3da; background: #edf0f5; color: #888; font-size: 28px; padding-bottom: 6px; }
.vscroll { width: 28px; margin: 1px 0 6px; border: 1px solid #bbb; border-right: 0; background: #fff; display: flex; flex-direction: column; }
.vscroll .plain { height: 28px; }
.vthumb { flex: 0 0 85%; background: #dcdcdc; border: 2px solid #b5b5b5; border-width: 2px 0; display: grid; place-items: center; padding-bottom: 1px; }
.vthumb svg { align-self: center; }
.vscroll .bottom { margin-top: auto; border-top: 1px solid #bbb; }
```
